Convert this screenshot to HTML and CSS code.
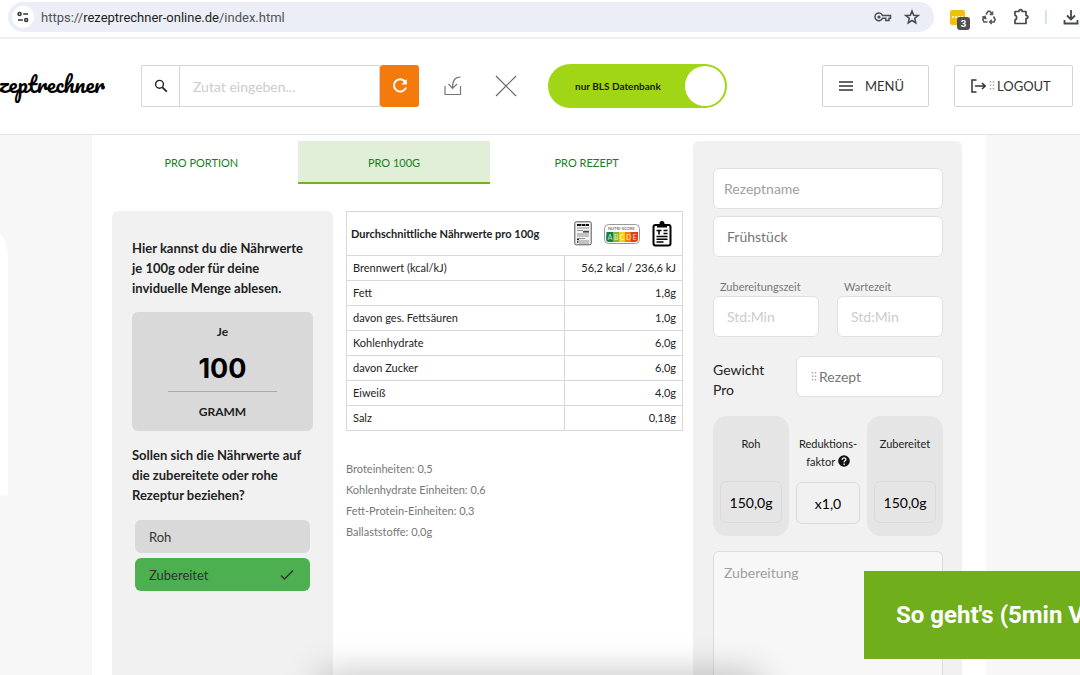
FILE: index.html
```html
<!DOCTYPE html>
<html lang="de">
<head>
<meta charset="utf-8">
<meta name="viewport" content="width=device-width, initial-scale=1">
<title>Rezeptrechner</title>
<link rel="stylesheet" href="styles.css">
</head>
<body>
<div class="browser">
  <div class="address">
    <button class="site-info" aria-label="Website-Informationen"><svg width="12" height="12" viewBox="0 0 12 12" fill="none" stroke="#333" stroke-width="1.5"><circle cx="2.6" cy="3" r="1.5"/><path d="M6.2 3H11M1 9h4.800"/><circle cx="9.200" cy="9" r="1.500"/></svg></button>
    <span class="url">https://<b>rezeptrechner-online.de</b>/index.html</span>
    <svg class="key" width="18" height="12" viewBox="0 0 18 12" fill="none" stroke="#4a4d52" stroke-width="1.500"><path d="M8.500 4.500H16.500V7.200H15V9.500H11.800V7.200H8.500A3.900 3.900 0 1 1 8.500 4.500z"/><circle cx="5" cy="6" r="1.600" fill="#4a4d52" stroke="none"/></svg>
    <svg width="16" height="16" viewBox="0 0 16 16" fill="none" stroke="#44474c" stroke-width="1.500"><path d="M8 2l1.700 4.200 4.500.3-3.500 2.900 1.100 4.500L8 11.500l-3.800 2.400 1.100-4.500L1.800 6.500l4.500-.3z"/></svg>
  </div>
  <div class="extensions">
    <button class="note-ext" aria-label="Erweiterung, 3"><svg width="15" height="15" viewBox="0 0 15 15" fill="#fff"><circle cx="3" cy="7" r="1"/><circle cx="6" cy="7" r="1"/><circle cx="9" cy="7" r="1"/><circle cx="12" cy="7" r="1"/></svg><span class="badge">3</span></button>
    <svg width="16" height="16" viewBox="0 0 16 16" fill="none" stroke="#55585c" stroke-width="1.600"><path d="M5 5.500L7 2.300h2l1.700 2.800M11.500 2.500v3H8.700M12.500 7.500l1.700 3-1.200 2.500H9M10.700 10.800L8.700 13l2 2M6.500 13H3l-1.200-2.500 1.900-3M1.200 8.200l2.800-.8.900 2.800"/></svg>
    <svg width="16" height="18" viewBox="0 0 16 18" fill="none" stroke="#44474c" stroke-width="1.700" stroke-linejoin="round"><path d="M2 3.500h3.800c0-2.500 3.400-2.500 3.400 0H13v4c2.500 0 2.500 3.200 0 3.200V15.500H2v-3.600c2.200-.6 2.200-4 0-4.600z"/></svg>
    <span class="divider"></span>
    <svg width="16" height="16" viewBox="0 0 16 16" fill="none" stroke="#44474c" stroke-width="1.800"><path d="M8 1v9M4 6.500l4 4 4-4M1.500 11v3.500h13V11"/></svg>
  </div>
</div>

<header class="header">
  <a class="logo" href="#">rezeptrechner</a>
  <form class="search">
    <button type="button" class="search-go" aria-label="Suchen"><svg width="14" height="14" viewBox="0 0 14 14" fill="none" stroke="#222" stroke-width="1.400"><circle cx="5.500" cy="5.300" r="3.900"/><path d="M8.400 8.300l4.400 4.300" stroke-width="1.800"/></svg></button>
    <input type="text" aria-label="Zutat" placeholder="Zutat eingeben...">
    <button type="reset" class="reset" aria-label="Zurücksetzen"><svg width="16" height="16" viewBox="0 0 16 16" fill="none" stroke="#fff" stroke-width="2"><path d="M13 3.500A6.200 6.200 0 1 0 14 9.500"/><path d="M14.800 1v5.500H9.300z" fill="#fff" stroke="none"/></svg></button>
  </form>
  <button class="tool" aria-label="Speichern"><svg width="18" height="20" viewBox="0 0 18 20" fill="none" stroke="#777" stroke-width="1.200"><path d="M1 10v8.500h15.500V10M16.500 1C11 1 8.500 4 8.500 12M4.500 8l4 4.500L13 8"/></svg></button>
  <button class="tool" aria-label="Löschen"><svg width="22" height="22" viewBox="0 0 22 22" stroke="#666" stroke-width="1.200"><path d="M1 1l20 20M21 1L1 21"/></svg></button>
  <label class="toggle"><input type="checkbox" checked><span>nur BLS Datenbank</span><i></i></label>
  <nav class="nav">
    <button class="menu"><svg width="14" height="10" viewBox="0 0 14 10" stroke="#333" stroke-width="1.500"><path d="M0 1h14M0 5h14M0 9h14"/></svg>MENÜ</button>
    <button class="logout"><svg width="16" height="14" viewBox="0 0 16 14" fill="none" stroke="#333" stroke-width="1.500"><path d="M5.500 1H1v12h4.500M4 7h10M11 4l3.200 3L11 10"/></svg><svg class="grip" width="6" height="9" viewBox="0 0 6 9"><path d="M1.500 0v9M4.500 0v9"/></svg>LOGOUT</button>
  </nav>
</header>

<main class="page">
  <aside class="side"></aside>
  <div class="content">
    <section class="values">
      <div class="tabs">
        <button>PRO PORTION</button><button class="active">PRO 100G</button><button>PRO REZEPT</button>
      </div>
      <div class="columns">
        <div class="settings">
          <p>Hier kannst du die Nährwerte je 100g oder für deine inviduelle Menge ablesen.</p>
          <div class="amount">
            <label for="gram">Je</label>
            <input id="gram" type="text" value="100">
            <span>GRAMM</span>
          </div>
          <p>Sollen sich die Nährwerte auf die zubereitete oder rohe Rezeptur beziehen?</p>
          <div class="choices">
            <label><input type="radio" name="state">Roh</label>
            <label><input type="radio" name="state" checked>Zubereitet<svg width="14" height="12" viewBox="0 0 14 12" fill="none" stroke="#333" stroke-width="1.500"><path d="M1 6.500l3.500 3.500L13 1.500"/></svg></label>
          </div>
        </div>
        <div class="results">
          <table>
            <thead><tr><th colspan="2"><div class="caption"><span>Durchschnittliche Nährwerte pro 100g</span>
              <svg width="18" height="25" viewBox="0 0 18 25"><rect x=".8" y=".8" width="16.400" height="23" rx="1.500" fill="#f3f3f3" stroke="#555"/><path d="M3 4h12" stroke="#111" stroke-width="2.200" stroke-dasharray="4 .5"/><path d="M3 7h12M3 9.500h6M10 10h5M3 13h12M3 15h12M3 17.500h8M5 20h10M5 22h10" stroke="#777" stroke-width=".8"/><path d="M9 10.800h6M3 18.500h2M3 21h1.500" stroke="#222" stroke-width="1.300"/></svg>
              <svg width="36" height="20" viewBox="0 0 36 20"><rect x=".5" y=".5" width="35" height="19" rx="4" fill="#fff" stroke="#999"/><path d="M2.500 8H9v10H5a3 3 0 0 1-3-3z" fill="#168044"/><path d="M9 8h6v10H9z" fill="#83b735"/><path d="M15 8h6v10h-6z" fill="#f8ce12"/><path d="M21 8h6v10h-6z" fill="#ee8100"/><path d="M27 8h7v7a3 3 0 0 1-3 3h-4z" fill="#e63b18"/><g font-family="Lato" font-weight="700"><text x="4" y="6" font-size="4" fill="#777">NUTRI-SCORE</text><g font-size="7" fill="#fff" fill-opacity=".65"><text x="3.500" y="15.500">A</text><text x="10" y="15.500">B</text><text x="16" y="15.500">C</text><text x="22" y="15.500">D</text><text x="28.500" y="15.500">E</text></g></g></svg>
              <svg width="20" height="26" viewBox="0 0 20 26" fill="none" stroke="#000" stroke-width="2"><rect x="1.500" y="4" width="17" height="20.500" rx="2"/><path d="M5 3h3a2 2 0 0 1 4 0h3v3.500H5z" fill="#000" stroke="none"/><circle cx="10" cy="2.500" r="1.500"/><path d="M4.500 9.500h5M7 9.500v4M11.500 9.500h4M11.500 12.500h4M4.500 15.500h11M4.500 18.200h11M4.500 21h7" stroke-width="1.600"/></svg>
            </div></th></tr></thead>
            <tbody>
              <tr><td>Brennwert (kcal/kJ)</td><td>56,2 kcal / 236,6 kJ</td></tr>
              <tr><td>Fett</td><td>1,8g</td></tr>
              <tr><td>davon ges. Fettsäuren</td><td>1,0g</td></tr>
              <tr><td>Kohlenhydrate</td><td>6,0g</td></tr>
              <tr><td>davon Zucker</td><td>6,0g</td></tr>
              <tr><td>Eiweiß</td><td>4,0g</td></tr>
              <tr><td>Salz</td><td>0,18g</td></tr>
            </tbody>
          </table>
          <ul class="units"><li>Broteinheiten: 0,5</li><li>Kohlenhydrate Einheiten: 0,6</li><li>Fett-Protein-Einheiten: 0,3</li><li>Ballaststoffe: 0,0g</li></ul>
        </div>
      </div>
    </section>
    <form class="recipe">
      <input class="field" type="text" aria-label="Rezeptname" placeholder="Rezeptname">
      <select class="field" aria-label="Mahlzeit"><option>Frühstück</option></select>
      <div class="times">
        <div><label for="prep">Zubereitungszeit</label><input class="field time" id="prep" type="text" placeholder="Std:Min"></div>
        <div><label for="wait">Wartezeit</label><input class="field time" id="wait" type="text" placeholder="Std:Min"></div>
      </div>
      <div class="weight">
        <label for="per">Gewicht Pro</label>
        <div class="field per"><svg class="grip" width="6" height="9" viewBox="0 0 6 9"><path d="M1.500 0v9M4.500 0v9"/></svg><select id="per"><option>Rezept</option></select></div>
      </div>
      <div class="factors">
        <div class="card"><label for="raw">Roh</label><input id="raw" type="text" value="150,0g"></div>
        <div class="card plain"><label for="factor">Reduktions-<br>faktor <svg width="12" height="12" viewBox="0 0 12 12"><circle cx="6" cy="6" r="5.800" fill="#111"/><path d="M4.200 4.800C4 2.300 8 2.300 7.900 4.600 7.900 5.900 6.100 5.800 6.100 7.400M6.100 8.500v1.400" fill="none" stroke="#fff" stroke-width="1.300"/></svg></label><input id="factor" type="text" value="x1,0"></div>
        <div class="card"><label for="done">Zubereitet</label><input id="done" type="text" value="150,0g"></div>
      </div>
      <textarea aria-label="Zubereitung" placeholder="Zubereitung"></textarea>
    </form>
  </div>
</main>
<div class="bottom-shade"></div>
<a class="video" href="#">So geht's (5min Video)</a>
</body>
</html>
```
FILE: styles.css
```css
* { box-sizing: border-box; }
body { margin: 0; height: 100vh; overflow: hidden; display: flex; flex-direction: column; font-family: Lato, sans-serif; font-size: 14px; color: #222; background: #fff; }
button, input, select, textarea { font: inherit; color: inherit; margin: 0; }
button { border: 0; padding: 0; background: none; display: flex; align-items: center; justify-content: center; }
svg { flex: none; display: block; }
input, select, textarea { border-radius: 0; min-width: 0; outline: 0; }
select { appearance: none; opacity: 1; }

.browser { display: flex; align-items: center; height: 39px; padding: 2px 0 5px 8px; border-bottom: 2px solid #efefef; flex: none; }
.address { flex: 1; height: 30px; border-radius: 15px; background: #ebeef7; display: flex; align-items: center; padding: 0 14px 0 4px; gap: 12px; }
.site-info { width: 22px; height: 22px; border-radius: 50%; background: #fff; }
.url { font: 13px Roboto, sans-serif; color: #505256; margin-left: -5px; }
.url b { font-weight: 400; color: #1d1f22; }
.key { margin-left: auto; }
.extensions { display: flex; align-items: center; gap: 16px; padding-left: 16px; margin-right: 1px; }
.note-ext { position: relative; width: 15px; height: 15px; border-radius: 2px; background: #f4bf0b; }
.badge { position: absolute; left: 7px; top: 7px; width: 13px; height: 13px; border-radius: 3px; background: #505050; color: #fff; font: bold 9px/13px Inter, sans-serif; }
.divider { width: 2px; height: 14px; background: #d5e2fa; }

.header { flex: none; height: 96px; display: flex; align-items: center; border-bottom: 1px solid #e2e2e2; padding: 0 7px 2px 0; }
.logo { width: 105px; margin-right: 36px; padding-bottom: 4px; display: flex; justify-content: flex-end; overflow: hidden; font: 400 22px/42px Pacifico, cursive; color: #000; text-decoration: none; flex: none; }
.search { display: flex; flex: 0 1 278px; height: 42px; min-width: 0; }
.search-go { width: 38px; border: 1px solid #d6d6d6; border-right: 0; border-radius: 2px 0 0 2px; }
.search input { flex: 1; border: 1px solid #d6d6d6; padding: 2px 13px 0; }
.search-go, .reset { flex: none; }
.reset { width: 39px; border-radius: 3px; background: #f47a0c; }
.tool { margin-left: 25px; flex: none; }
.tool + .tool { margin-left: 33px; }
.toggle { position: relative; flex: none; display: flex; align-items: center; justify-content: space-between; margin-left: 31px; width: 179px; height: 44px; border-radius: 22px; background: #a0d615; padding: 0 2px 0 27px; font-size: 10px; font-weight: 700; color: #16200a; }
.toggle input { position: absolute; opacity: 0; }
.toggle i { width: 40px; height: 40px; border-radius: 50%; background: #fff; }
.nav { margin-left: auto; display: flex; gap: 25px; }
.nav button { height: 42px; border: 1px solid #d3d3d3; border-radius: 2px; color: #333; font-size: 13px; justify-content: flex-start; padding: 0 16px; }
.menu { width: 107px; gap: 12px; }
.logout { width: 119px; gap: 2px; }
.grip { stroke: #aaa; stroke-width: 1.500; stroke-dasharray: 1.500 2; }
::placeholder { color: #ccc; opacity: 1; }

.page { flex: 1; min-height: 0; display: grid; grid-template-columns: 92px 1fr 94px; background: #f7f7f7; }
.side { width: 8px; height: 260px; margin-top: 100px; background: #fff; border-radius: 0 8px 0 0 / 0 24px 0 0; }
.content { background: #fff; display: grid; grid-template-columns: 1fr 269px; gap: 10px; padding: 6px 24px 0 13px; min-height: 0; }
.values { display: flex; flex-direction: column; }
.tabs { display: grid; grid-template-columns: repeat(3, 1fr); }
.tabs button { height: 43px; padding-top: 2px; font-size: 11px; color: #15801c; border-bottom: 2px solid transparent; }
.tabs .active { background: #e2efd8; border-color: #72b01d; }
.columns { flex: 1; display: grid; grid-template-columns: 221px 1fr; gap: 13px; padding: 27px 0 0 7px; }
.settings { background: #f1f1f1; border-radius: 6px 6px 0 0; padding: 27px 20px; }
.settings p { margin: 0; font-weight: 700; font-size: 13px; line-height: 20px; }
.amount { margin: 14px 0; height: 119px; background: #d9d9d9; border-radius: 6px; display: flex; flex-direction: column; align-items: center; font-size: 12px; font-weight: 700; line-height: 20px; padding-top: 10px; }
.amount input { width: 60%; height: 50px; margin-bottom: 10px; padding: 4px 0 0; text-align: center; background: none; border: 0; border-bottom: 1px solid #aaa; font: bold 27px Inter, sans-serif; color: #000; }
.choices { display: grid; gap: 5px; padding: 15px 3px; }
.choices label { height: 33px; border-radius: 6px; background: #d9d9d9; display: flex; align-items: center; justify-content: space-between; padding: 0 16px 0 14px; font-size: 13px; color: #333; }
.choices label:has(:checked) { background: #4caf50; }
.choices input { position: absolute; opacity: 0; }

table { width: 100%; border-collapse: collapse; font-size: 11px; line-height: 14px; }
th, td { border: 1px solid #d8d8d8; height: 25px; padding: 0 6px; text-align: left; }
th { height: 44px; padding: 0 10px 0 4px; }
td:last-child { text-align: right; width: 35%; }
.caption { display: flex; align-items: center; gap: 12px; }
.caption span { margin-right: auto; }
.units { list-style: none; margin: 27px 0 0; padding: 0; font-size: 11px; line-height: 21px; color: #777; }

.recipe { background: #f1f1f1; border-radius: 6px 6px 0 0; padding: 27px 19px 0 20px; display: flex; flex-direction: column; min-height: 0; }
.field { display: block; width: 100%; height: 41px; border: 1px solid #e0e0e0; border-radius: 6px; background: #fff; padding: 0 10px; color: #777; flex: none; }
.field + .field { margin-top: 7px; padding: 0 13px; }
.field:first-child::placeholder, textarea::placeholder { color: #a0a0a0; }
.times { display: grid; grid-template-columns: 1fr 1fr; gap: 18px; margin-top: 20px; }
.times label { display: block; font-size: 11px; line-height: 19px; padding-left: 7px; color: #777; }
.time { padding: 0 13px; }
.weight { display: flex; justify-content: space-between; margin-top: 19px; line-height: 20px; }
.weight label { width: 60px; padding-top: 4px; margin-bottom: -3px; }
.per { width: 147px; display: flex; align-items: center; gap: 2px; padding: 0 14px; }
.per select { border: 0; background: none; padding: 0; flex: 1; }
.factors { display: grid; grid-template-columns: 76px 1fr 76px; gap: 7px; margin-top: 19px; }
.card { display: flex; flex-direction: column; justify-content: space-between; height: 120px; padding: 19px 7px 13px; background: #e5e5e5; border-radius: 14px; text-align: center; font-size: 11px; line-height: 18px; }
.card.plain { background: none; padding: 19px 0 12px; }
.card label svg { display: inline-block; vertical-align: -1px; }
.card input { width: 100%; height: 42px; padding: 0; text-align: center; border: 1px solid #dadada; border-radius: 6px; background: none; font-size: 14px; color: #000; }
textarea { flex: 1; min-height: 0; margin-top: 15px; border: 1px solid #ddd; border-bottom: 0; border-radius: 6px 6px 0 0; background: #f7f7f7; padding: 12px 10px; resize: none; }

.bottom-shade { position: fixed; left: 30%; right: 30%; bottom: -24px; height: 20px; box-shadow: 0 0 36px 4px rgba(0, 0, 0, .28); }
.video { position: fixed; left: 80%; right: 0; bottom: 16px; height: 88px; padding-left: 32px; background: #70ae1b; color: #fff; font: bold 24px/88px Roboto, sans-serif; text-decoration: none; white-space: nowrap; overflow: hidden; }
```
